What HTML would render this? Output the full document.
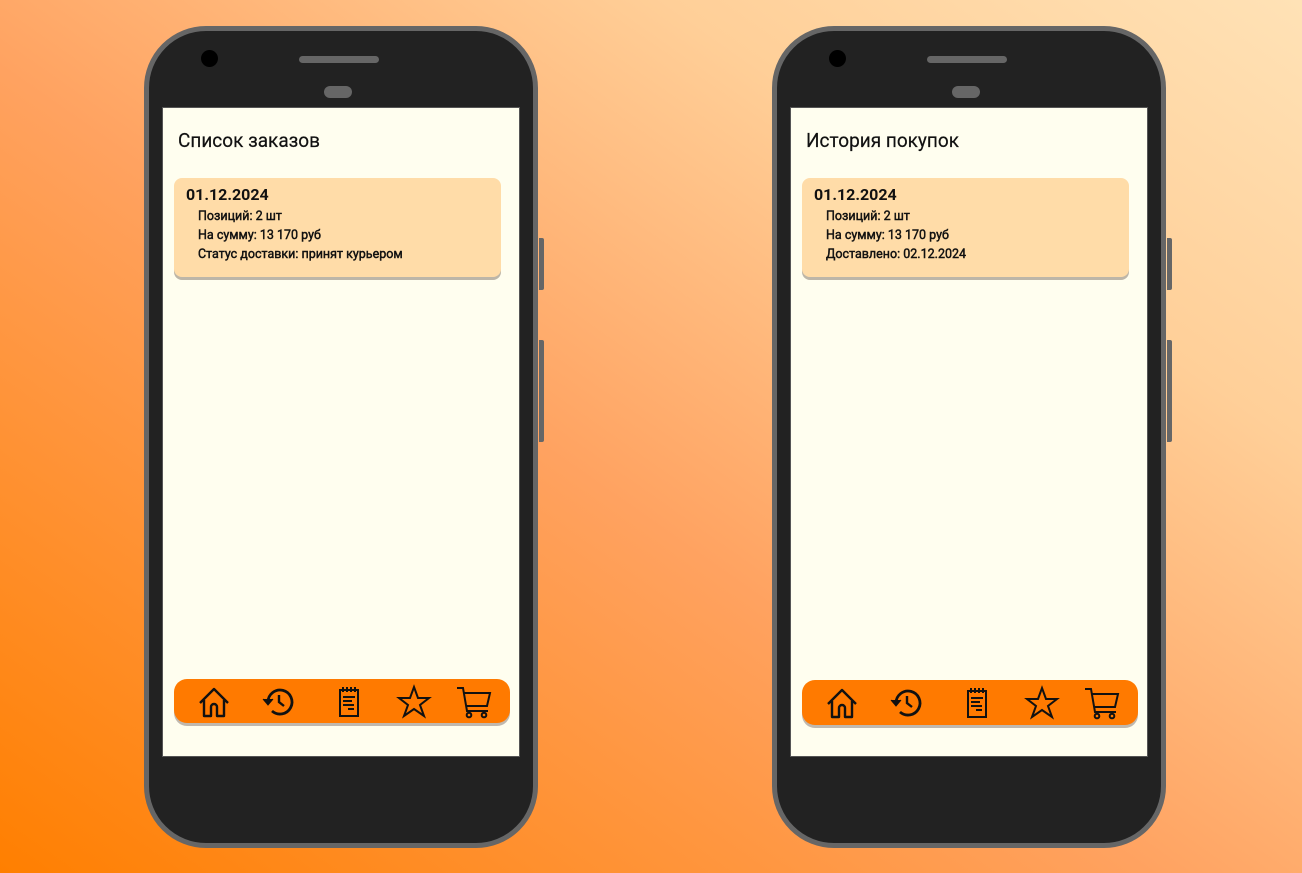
<!DOCTYPE html>
<html><head><meta charset="utf-8"><style>
*{margin:0;padding:0;box-sizing:border-box}
body{width:1302px;height:873px;overflow:hidden;background:linear-gradient(35deg,#ff7f00 0%,#ffa260 45%,#ffcf98 75%,#ffe2b6 100%);font-family:"Roboto","Liberation Sans",sans-serif;position:relative}
.phone{position:absolute;top:26px;width:394px;height:822px;background:#222;border:5px solid #666;border-radius:62px}
.btn{position:absolute;left:390px;width:5px;background:#666;border-radius:0 2px 2px 0}
.cam{position:absolute;left:52px;top:19px;width:17px;height:17px;border-radius:50%;background:#000}
.spk{position:absolute;left:150px;top:25px;width:80px;height:7px;border-radius:4px;background:#666}
.sen{position:absolute;left:175px;top:55px;width:28px;height:12px;border-radius:6px;background:#666}
.screen{position:absolute;left:13px;top:76px;width:358px;height:650px;background:#fffeef;border:1px solid #555}
.title{position:absolute;left:15px;top:21px;font-size:19px;color:#111;-webkit-text-stroke:0.2px #111}
.card{position:absolute;left:11px;top:70px;width:327px;height:99px;background:#ffdca8;border-radius:8px;box-shadow:0 3px 0 #bdb6a8}
.date{position:absolute;left:12px;top:7px;font-size:16px;font-weight:bold;color:#111}
.line{position:absolute;left:24px;font-size:12.5px;color:#111;-webkit-text-stroke:0.45px #111}
.nav{position:absolute;left:11px;top:571px;width:336px;height:44px;background:#ff7a00;border-radius:13px;box-shadow:0 3px 0 #c0b8ae}
.nav svg{position:absolute;top:5px}
</style></head><body>

<div class="phone" style="left:144px">
 <div class="btn" style="top:207px;height:52px"></div>
 <div class="btn" style="top:309px;height:102px"></div>
 <div class="cam"></div><div class="spk"></div><div class="sen"></div>
 <div class="screen">
  <div class="title">Список заказов</div>
  <div class="card">
   <div class="date">01.12.2024</div>
   <div class="line" style="top:31px">Позиций: 2 шт</div>
   <div class="line" style="top:50px">На сумму: 13 170 руб</div>
   <div class="line" style="top:69px">Статус доставки: принят курьером</div>
  </div>
  <div class="nav">NAVICONS</div>
 </div>
</div>

<div class="phone" style="left:772px">
 <div class="btn" style="top:207px;height:52px"></div>
 <div class="btn" style="top:309px;height:102px"></div>
 <div class="cam"></div><div class="spk"></div><div class="sen"></div>
 <div class="screen">
  <div class="title">История покупок</div>
  <div class="card">
   <div class="date">01.12.2024</div>
   <div class="line" style="top:31px">Позиций: 2 шт</div>
   <div class="line" style="top:50px">На сумму: 13 170 руб</div>
   <div class="line" style="top:69px">Доставлено: 02.12.2024</div>
  </div>
  <div class="nav" style="top:572px;height:45px">NAVICONS</div>
 </div>
</div>

<script>
var icons=`
<svg style="left:22px" width="36" height="36" viewBox="0 0 36 36" fill="none" stroke="#111" stroke-width="2.4" stroke-linejoin="round"><path d="M4 19 L18 5 L32 19 M8 16 V32 H15 V23 a3 3 0 0 1 6 0 V32 H28 V16"/></svg>
<svg style="left:86px" width="36" height="36" viewBox="0 0 36 36" fill="none" stroke="#111" stroke-width="2.8"><path d="M8 18 A12 12 0 1 1 12 27"/><path d="M3 15 L8 21 L13 15" fill="#111" stroke-width="1"/><path d="M19 11 V18 L24 22" stroke-width="2.4"/></svg>
<svg style="left:156px" width="36" height="36" viewBox="0 0 36 36" fill="none" stroke="#111" stroke-width="2"><rect x="10" y="6" width="18" height="26"/><path d="M13 3V8M17 3V8M21 3V8M25 3V8M13 13H25M13 17H22M13 21H24M18 25H24"/></svg>
<svg style="left:222px" width="36" height="36" viewBox="0 0 36 36" fill="none" stroke="#111" stroke-width="2" stroke-linejoin="miter"><path d="M18 3 L22 14 L33 14 L24 21 L28 32 L18 25 L8 32 L12 21 L3 14 L14 14 Z"/></svg>
<svg style="left:282px" width="38" height="36" viewBox="0 0 38 36" fill="none" stroke="#111" stroke-width="2"><path d="M1 4 H7 L11 27 H32 M8 9 H34 L31 22 H10"/><circle cx="13" cy="31" r="2.3"/><circle cx="28" cy="31" r="2.3"/></svg>`;
document.querySelectorAll('.nav').forEach(n=>n.innerHTML=icons);
</script>
</body></html>
